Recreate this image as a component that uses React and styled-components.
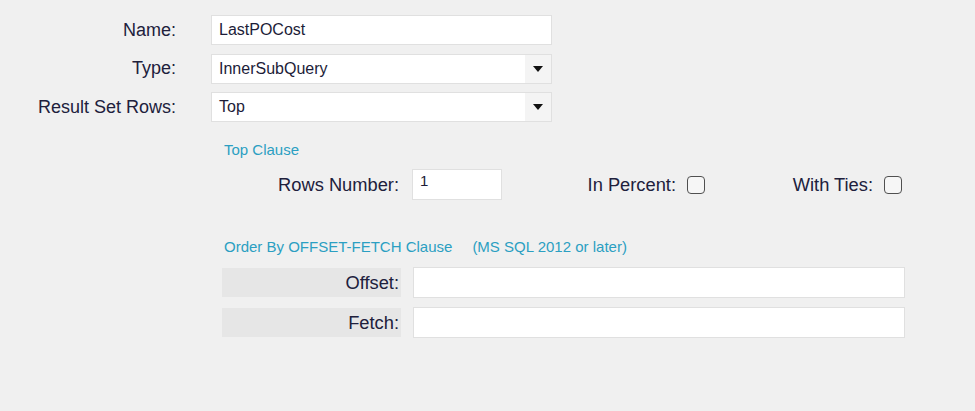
import React from "react";
import styled, { createGlobalStyle } from "styled-components";

//Styles//
const GlobalStyle = createGlobalStyle`
  html, body {
    margin: 0;
    padding: 0;
    background: #f0f0f0;
  }
  body {
    font-family: "Liberation Sans", Arial, sans-serif;
    color: #20203c;
  }
`;

const Page = styled.div`
  width: 975px;
  height: 411px;
  background: #f0f0f0;
  padding-top: 15px;
  box-sizing: border-box;
`;

const MainForm = styled.div`
  display: grid;
  grid-template-columns: 176px 341px;
  column-gap: 35px;
  row-gap: 8.5px;
  align-items: center;
`;

const Label = styled.div`
  font-size: 18px;
  text-align: right;
  color: #20203c;
  white-space: nowrap;
`;

const TextBox = styled.div`
  height: 30px;
  box-sizing: border-box;
  background: #fff;
  border: 1px solid #e0e0e0;
  display: flex;
  align-items: center;
  padding-left: 7px;
  font-size: 16px;
  color: #1c1c38;
`;

const Select = styled(TextBox)`
  padding-left: 0;
  span {
    flex: 1;
    padding-left: 7px;
  }
`;

const DropButton = styled.div`
  width: 26px;
  height: 100%;
  background: #f4f4f4;
  display: flex;
  align-items: center;
  justify-content: center;
  &::after {
    content: "";
    border-left: 5.5px solid transparent;
    border-right: 5.5px solid transparent;
    border-top: 6px solid #111;
  }
`;

const Panel = styled.div`
  margin-left: 222px;
  width: 683px;
  margin-top: 20px;
`;

const Heading = styled.div`
  font-size: 15px;
  line-height: 16px;
  color: #2b9fc2;
  padding-left: 2px;
  margin-top: ${(p) => p.top || 0}px;
  span {
    margin-left: 20px;
  }
`;

const TopRow = styled.div`
  display: flex;
  align-items: center;
  margin-top: 11px;
  height: 31px;
`;

const SubLabel = styled.div`
  font-size: 18.3px;
  color: #20203c;
  text-align: right;
  white-space: nowrap;
  width: ${(p) => p.width || "auto"};
  padding-right: 2px;
  box-sizing: border-box;
`;

const NumberBox = styled(TextBox)`
  height: 31px;
  width: 90px;
  margin-left: 11px;
  align-items: flex-start;
  padding-top: 2px;
  font-size: 15px;
`;

const CheckGroup = styled.div`
  display: flex;
  align-items: center;
  justify-content: flex-end;
  gap: 9px;
  width: ${(p) => p.width}px;
`;

const Check = styled.div`
  width: 18px;
  height: 18px;
  box-sizing: border-box;
  border: 1.5px solid #505050;
  border-radius: 4px;
  background: #f6f6f6;
  margin-right: ${(p) => p.right || 0}px;
`;

const FetchGrid = styled.div`
  display: grid;
  grid-template-columns: 179px 492px;
  column-gap: 12px;
  row-gap: 10px;
  margin-top: 13px;
`;

const GreyLabel = styled.div`
  height: 29px;
  background: #e6e6e6;
  display: flex;
  align-items: center;
  justify-content: flex-end;
  padding-right: 2px;
  font-size: 18.3px;
  color: #20203c;
`;

const WideBox = styled(TextBox)`
  height: 31px;
  margin-top: -1px;
`;

export default function App() {
  return (
    <Page>
      <GlobalStyle />
      <MainForm>
        <Label>Name:</Label>
        <TextBox>LastPOCost</TextBox>
        <Label>Type:</Label>
        <Select>
          <span>InnerSubQuery</span>
          <DropButton />
        </Select>
        <Label>Result Set Rows:</Label>
        <Select>
          <span>Top</span>
          <DropButton />
        </Select>
      </MainForm>

      <Panel>
        <Heading>Top Clause</Heading>
        <TopRow>
          <SubLabel width="179px">Rows Number:</SubLabel>
          <NumberBox>1</NumberBox>
          <CheckGroup width={203}>
            <SubLabel>In Percent:</SubLabel>
            <Check />
          </CheckGroup>
          <CheckGroup width={198}>
            <SubLabel>With Ties:</SubLabel>
            <Check right={1} />
          </CheckGroup>
        </TopRow>

        <Heading top={39}>
          Order By OFFSET-FETCH Clause<span>(MS SQL 2012 or later)</span>
        </Heading>
        <FetchGrid>
          <GreyLabel>Offset:</GreyLabel>
          <WideBox />
          <GreyLabel>Fetch:</GreyLabel>
          <WideBox />
        </FetchGrid>
      </Panel>
    </Page>
  );
}
